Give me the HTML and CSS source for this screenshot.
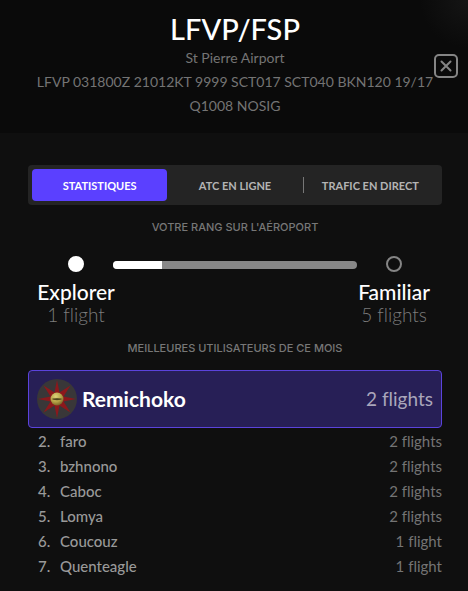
FILE: index.html
```html
<!DOCTYPE html>
<html lang="fr">
<head>
<meta charset="utf-8">
<meta name="viewport" content="width=device-width, initial-scale=1">
<title>LFVP/FSP</title>
<link rel="stylesheet" href="styles.css">
</head>
<body>
<header class="header">
  <h1 class="title">LFVP/FSP</h1>
  <p class="info">St Pierre Airport</p>
  <p class="info">LFVP 031800Z 21012KT 9999 SCT017 SCT040 BKN120 19/17 Q1008 NOSIG</p>
  <button class="close" type="button" aria-label="Fermer">
    <svg viewBox="0 0 24 24" width="24" height="24" fill="none" stroke="#858585" stroke-width="2" stroke-linecap="round">
      <rect x="1" y="1" width="22" height="22" rx="4"/>
      <path d="M7.500 7.500l9 9M16.500 7.500l-9 9"/>
    </svg>
  </button>
</header>
<main class="content">
  <nav class="tabs">
    <button class="tab tab-active" type="button">STATISTIQUES</button>
    <button class="tab" type="button">ATC EN LIGNE</button>
    <button class="tab tab-divided" type="button">TRAFIC EN DIRECT</button>
  </nav>
  <h2 class="label">VOTRE RANG SUR L'AÉROPORT</h2>
  <section class="rank">
    <div class="level">
      <span class="dot dot-reached"></span>
      <span class="level-name">Explorer</span>
      <span class="level-count">1 flight</span>
    </div>
    <div class="bar"><div class="bar-fill" style="width:20%"></div></div>
    <div class="level">
      <span class="dot"></span>
      <span class="level-name">Familiar</span>
      <span class="level-count">5 flights</span>
    </div>
  </section>
  <h2 class="label">MEILLEURES UTILISATEURS DE CE MOIS</h2>
  <section class="leader">
    <svg class="avatar" viewBox="0 0 40 40" width="40" height="40">
      <defs>
        <radialGradient id="gold" cx=".4" cy=".3" r=".7">
          <stop offset="0" stop-color="#ddd17a"/>
          <stop offset=".6" stop-color="#b5a346"/>
          <stop offset="1" stop-color="#7b6528"/>
        </radialGradient>
      </defs>
      <circle cx="20" cy="20" r="20" fill="#393738"/>
      <path fill="#8c181c" d="M20 1l2.500 12.500L33.500 6.500 26.500 17.500 39 20l-12.500 2.500 7 11-11-7L20 39l-2.500-12.500-11 7 7-11L1 20l12.500-2.500-7-11 11 7z"/>
      <circle cx="20" cy="20" r="6.500" fill="url(#gold)"/>
      <path d="M15.500 20q4.500-1 9 0q-4.500 1.800-9 0z" fill="#494019" stroke="#494019" stroke-width=".6"/>
    </svg>
    <span class="leader-name">Remichoko</span>
    <span class="leader-count">2 flights</span>
  </section>
  <ol class="list">
    <li class="row"><span class="place">2.</span><span class="name">faro</span><span>2 flights</span></li>
    <li class="row"><span class="place">3.</span><span class="name">bzhnono</span><span>2 flights</span></li>
    <li class="row"><span class="place">4.</span><span class="name">Caboc</span><span>2 flights</span></li>
    <li class="row"><span class="place">5.</span><span class="name">Lomya</span><span>2 flights</span></li>
    <li class="row"><span class="place">6.</span><span class="name">Coucouz</span><span>1 flight</span></li>
    <li class="row"><span class="place">7.</span><span class="name">Quenteagle</span><span>1 flight</span></li>
  </ol>
</main>
</body>
</html>
```
FILE: styles.css
```css
* {
  box-sizing: border-box;
}

body {
  margin: 0;
  background: #0f0f0f;
  color: #fff;
  font-family: Lato, "Liberation Sans", sans-serif;
  font-variant-ligatures: none;
}

h1, h2, p, ol {
  margin: 0;
  padding: 0;
}

button {
  border: 0;
  padding: 0;
  background: none;
  font-family: inherit;
  cursor: pointer;
}

.header {
  position: relative;
  padding: 12px 26px 15px 28px;
  background: radial-gradient(circle at 100% 0, #151515, #0a0a0a 48px);
  text-align: center;
}

.title {
  font-size: 29px;
  line-height: 34px;
  font-weight: 500;
}

.info {
  color: #747474;
  font-size: 14px;
  line-height: 24px;
}

.close {
  position: absolute;
  top: 54px;
  right: 10px;
  width: 24px;
  height: 24px;
}

.close svg {
  display: block;
}

.content {
  padding: 32px 26px 12px 28px;
}

.tabs {
  display: grid;
  grid-template-columns: repeat(3, 1fr);
  padding: 4px;
  border-radius: 4px;
  background: #242424;
}

.tab {
  height: 32px;
  border-radius: 4px;
  color: #b4b4b4;
  font-size: 11px;
  font-weight: 700;
}

.tab-active {
  background: #5b40ff;
  color: #fff;
}

.tab-divided {
  border-radius: 0;
  background: linear-gradient(#777, #777) left center / 1px 16px no-repeat;
}

.label {
  padding-top: 12px;
  color: #777;
  font-family: Inter, Lato, sans-serif;
  font-size: 11px;
  line-height: 20px;
  font-weight: 500;
  text-align: center;
}

.rank {
  display: grid;
  grid-template-columns: 76px 1fr 76px;
  padding: 19px 10px 0;
}

.level {
  display: flex;
  flex-direction: column;
  align-items: center;
  white-space: nowrap;
}

.dot {
  width: 16px;
  height: 16px;
  border: 2px solid #858585;
  border-radius: 50%;
}

.dot-reached {
  border-color: #fff;
  background: #fff;
}

.level-name {
  margin-top: 8px;
  font-size: 21px;
  line-height: 24px;
  font-weight: 500;
}

.level-count {
  color: #7c7c7c;
  font-size: 19px;
  line-height: 22px;
  font-weight: 300;
}

.bar {
  height: 8px;
  margin: 5px -1px 0;
  border-radius: 4px;
  background: #888;
  overflow: hidden;
}

.bar-fill {
  height: 100%;
  background: #fff;
}

.leader {
  display: flex;
  align-items: center;
  margin-top: 12px;
  padding: 8px;
  border: 1px solid #5b43dc;
  border-radius: 4px;
  background: #271f56;
}

.leader-name {
  flex: 1;
  margin-left: 5px;
  font-size: 21px;
  line-height: 24px;
  font-weight: 700;
}

.leader-count {
  color: #aaa6bb;
  font-size: 19px;
  line-height: 24px;
}

.list {
  padding-top: 1px;
  list-style: none;
}

.row {
  display: flex;
  padding-left: 10px;
  color: #747474;
  font-size: 15px;
  line-height: 25px;
}

.place {
  width: 22px;
  color: #999;
  font-weight: 500;
}

.name {
  flex: 1;
  color: #999;
  font-weight: 500;
}
```
